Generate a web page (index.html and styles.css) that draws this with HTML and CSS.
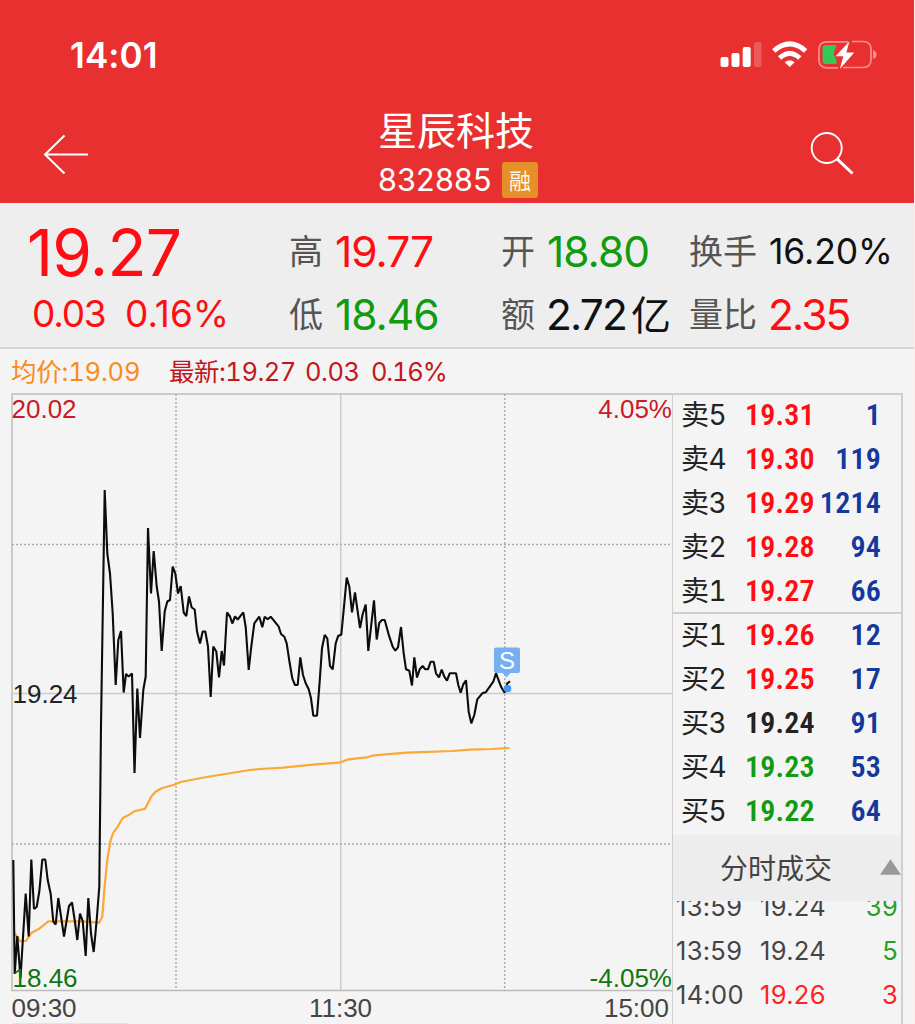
FILE: index.html
```html
<!DOCTYPE html>
<html lang="zh-CN">
<head>
<meta charset="utf-8">
<title>星辰科技 832885</title>
<link rel="stylesheet" href="styles.css">
</head>
<body>
<main class="app">
  <header class="header">
    <div class="status">
      <span class="clock">14:01</span>
      <svg class="status-icons" width="160" height="32" viewBox="718 39 160 32">
        <g fill="#fff">
          <rect x="720.5" y="57" width="8" height="10" rx="2"/>
          <rect x="731.5" y="53" width="8" height="14" rx="2"/>
          <rect x="742.7" y="47" width="8" height="20" rx="2"/>
          <rect x="754" y="42" width="7.5" height="25" rx="2" opacity=".2"/>
          <path d="M789.7 67l-5-4.800q5-3.800 10 0z"/>
        </g>
        <g fill="none" stroke="#fff" stroke-width="5">
          <path d="M773.800 51q15.900-14.200 31.800 0"/>
          <path d="M779.600 58q10.100-9 20.200 0"/>
        </g>
        <path d="M848 41.800H827q-8 0-8 8v10q0 8 8 8h11M843 67.500H863q8 0 8-8v-10q0-8-8-8h-11" fill="none" stroke="#f58e8e" stroke-width="1.700"/>
        <path d="M873 50q3.500 1 3.500 4.500t-3.500 4.500z" fill="#f58e8e"/>
        <path d="M826 45h10.500l-1 4q-3 4-.5 8l1.500 3v4H826q-3.500 0-3.500-3.500v-12q0-3.500 3.500-3.500z" fill="#36c759"/>
        <path d="M849.500 41.200L835.500 56.200H843.300L839.800 69L854.300 52.400H846.300z" fill="#fff"/>
      </svg>
    </div>
    <div class="nav">
      <svg class="back" width="46" height="42" viewBox="43 133 46 42"><path d="M64.500 135.500L45 154.500L64.500 173.500M45 154.500H88" fill="none" stroke="#fff" stroke-width="2"/></svg>
      <div class="name">
        <h1>星辰科技</h1>
        <p><span class="code">832885</span><span class="badge">融</span></p>
      </div>
      <svg class="search" width="46" height="46" viewBox="809 130 46 46"><circle cx="826.700" cy="148" r="15" fill="none" stroke="#fff" stroke-width="1.900"/><path d="M837 158.800L852.500 173.500" stroke="#fff" stroke-width="3"/></svg>
    </div>
  </header>

  <section class="quote">
    <div class="last">
      <b>19.27</b>
      <p><span class="diff">0.03</span><span>0.16%</span></p>
    </div>
    <dl class="stats">
      <div><dt>高</dt><dd class="up">19.77</dd></div>
      <div><dt>开</dt><dd class="down">18.80</dd></div>
      <div><dt>换手</dt><dd class="rate">16.20%</dd></div>
      <div><dt>低</dt><dd class="down">18.46</dd></div>
      <div><dt>额</dt><dd class="amount">2.72<i>亿</i></dd></div>
      <div><dt>量比</dt><dd class="up ratio">2.35</dd></div>
    </dl>
  </section>

  <p class="legend"><span class="avg">均价:19.09</span><span class="now">最新:19.27</span><span class="now chg">0.03</span><span class="now pct">0.16%</span></p>

  <section class="board">
    <div class="chart">
      <svg width="672" height="631" viewBox="0 393 672 631">
        <g fill="none" stroke="#bcbcbc" stroke-width="1.500">
          <path d="M12 394H672M12 393.500V990.500H672"/>
          <path d="M12 693.500H672M340.700 394V990" stroke="#cbcbcb"/>
          <path d="M12 544.500H672M12 844H672M176 394V991M504.700 394V991" stroke="#ababab" stroke-dasharray="2 2"/>
        </g>
        <polyline fill="none" stroke="#faa935" stroke-width="2.200" points="14.7,933 20,941 26,941 31.7,932.7 39.3,928.7 48.3,921.3 80,921.3 99.3,922.7 102.3,916.7 104.3,890 107.3,860 110.7,840 113.3,832.7 117.3,827.3 122.7,818 128.3,815.3 134.3,811.3 145,808.7 151.7,796 156,791.500 161.7,788.3 173.3,785 181.7,781.7 206.7,777 250,770 260,769 283,767.7 313,764.7 340.7,762.3 348.3,759.3 366.7,757.3 374,755.3 406.7,752.7 453,751 470,749.7 491.7,749 509.5,748"/>
        <polyline fill="none" stroke="#0c0c0c" stroke-width="2.100" stroke-linejoin="bevel" points="13.3,860 14.7,974 17.3,936 20.5,978 25.7,893.5 28.7,936.5 31.3,859.5 34,909 36.7,907 39.3,891.5 42.3,859.5 45.3,859.5 47.7,880 50.7,894 53.3,921.5 55.7,924.5 58.3,898 64,936.5 69,906 72,902.5 74.7,920 77.3,940 80,913.5 82.7,921 85.7,956 88.3,898 91,933.5 93.7,952 96.7,920 99.3,886.5 101,725 104.7,490 107.3,553.5 110,573.5 112.7,613.5 115.7,685 118.3,640 121,631 123.7,692.5 126,674 128.7,676.5 132,673.5 134.5,773 137.3,688.5 140,738 143.3,690 145.7,676.5 148,528 151,593.5 153.7,551 156.7,586.5 159,601.5 161.7,651 164.7,611.5 167.3,601.5 170,600 172.7,566.5 175.3,573.5 178,593.5 180.7,586 183.7,612.5 186.3,616 189,596.5 191.7,607.5 194.7,609.5 197,631.5 200,643.5 202.7,631.5 205.3,631.5 208,646.5 210.7,697 213.3,646.5 216.3,651.5 219,677.5 221.7,651 224,665.5 227,612.5 230,616.5 232.3,623.5 235,616.5 237.7,619.5 243.3,612.3 245.7,627 248.7,670 251.3,646.5 254.3,623.3 259.3,616.7 262.3,627.3 264.7,616.7 267.7,619.3 270.7,616.7 278.7,626.7 281,634 284.3,636.7 286.7,643.3 289.7,663.3 292.3,678.3 295,685 297.7,685 300.3,657.3 303,675 305.7,683.3 308.7,689.3 311,698.3 313.3,715.7 317,715.7 319.3,686.7 322,648.3 324.7,635 327.3,638.3 330,666 332.7,669.3 335.7,643.3 338.3,635.7 341.3,634.7 344,606.7 346.7,577.5 349.3,586.7 352,612.3 355,592.3 360,628 362.7,614 365.7,604.5 368.3,651 374,600.3 376.7,639.5 379.3,622.7 382,620 384.7,620 389.3,636.7 392.7,646.7 395.3,650.7 398,647.3 401,627 403.7,653.3 406,669.3 409.3,670.7 412,685.5 414.3,657.3 417,677.5 419.7,669.3 422.7,666 425.3,669.3 428,669.3 430.7,661.7 433.7,661.7 436,673.3 439,677.3 441.7,669.500 444.3,676.7 447,680.7 449.7,673.3 456,673.3 458.3,685 460.7,692.7 463.3,684.3 466,680.3 468.7,711.7 471.3,723.3 474.3,715 477.3,699.3 482.3,693.3 485.7,692.3 493.3,681.7 496,673.3 501.3,687.3 504.7,692.7 507.3,683.3 510,681.3"/>
        <circle cx="507.500" cy="688.500" r="3.800" fill="#4794ee"/>
        <path d="M496 647.500h22q2 0 2 2v21.500q0 2-2 2h-7.500l-4 4.500l-4-4.500h-6.500q-2 0-2-2v-21.500q0-2 2-2z" fill="#77aff3"/>
        <g class="labels">
          <text x="11.500" y="417.500" fill="#c91a26">20.02</text>
          <text x="672" y="417.500" fill="#c91a26" text-anchor="end">4.05%</text>
          <text x="12.500" y="702.500" fill="#222">19.24</text>
          <text x="12.500" y="986.500" fill="#117411">18.46</text>
          <text x="672" y="986.500" fill="#117411" text-anchor="end">-4.05%</text>
          <text x="11.500" y="1016.500" fill="#444">09:30</text>
          <text x="340.500" y="1016.500" fill="#444" text-anchor="middle">11:30</text>
          <text x="669" y="1016.500" fill="#444" text-anchor="end">15:00</text>
          <text x="507" y="669" class="mark" fill="#fff" text-anchor="middle">S</text>
        </g>
        <path d="M12 1023.500H128" stroke="#e4e4e4"/>
      </svg>
    </div>
    <aside class="side">
      <ul class="book">
        <li><span>卖5</span><b class="up">19.31</b><em>1</em></li>
        <li><span>卖4</span><b class="up">19.30</b><em>119</em></li>
        <li><span>卖3</span><b class="up">19.29</b><em>1214</em></li>
        <li><span>卖2</span><b class="up">19.28</b><em>94</em></li>
        <li><span>卖1</span><b class="up">19.27</b><em>66</em></li>
      </ul>
      <ul class="book bids">
        <li><span>买1</span><b class="up">19.26</b><em>12</em></li>
        <li><span>买2</span><b class="up">19.25</b><em>17</em></li>
        <li><span>买3</span><b>19.24</b><em>91</em></li>
        <li><span>买4</span><b class="down">19.23</b><em>53</em></li>
        <li><span>买5</span><b class="down">19.22</b><em>64</em></li>
      </ul>
      <div class="trades-title">分时成交<svg width="22" height="16" viewBox="0 0 22 16"><path d="M0 16L11 0L22 16z" fill="#999"/></svg></div>
      <ul class="trades">
        <li><span>13:59</span><span>19.24</span><span class="sell">39</span></li>
        <li><span>13:59</span><span>19.24</span><span class="sell">5</span></li>
        <li><span>14:00</span><span class="buy">19.26</span><span class="buy">3</span></li>
      </ul>
    </aside>
  </section>
</main>
</body>
</html>
```
FILE: styles.css
```css
* { box-sizing: border-box; margin: 0; padding: 0; }
body { background: #f8eeee; font-family: Inter, "Noto Sans CJK SC", sans-serif; overflow: hidden; }
ul { list-style: none; }
i, em { font-style: normal; }
.app { width: 914px; height: 1024px; background: #f4f4f4; overflow: hidden; white-space: nowrap; }
.up { color: #ff0d12; }
.down { color: #109b10; }

.header { height: 203px; background: #e83030; color: #fff; }
.status { height: 109px; padding: 0 36px 0 70px; display: flex; justify-content: space-between; align-items: center; }
.clock { font-size: 35px; font-weight: 600; letter-spacing: .1px; }
.nav { height: 94px; padding: 0 59px 0 43px; display: flex; }
.back { margin-top: 24px; }
.search { margin: 21px 0 0 auto; }
.name { width: 160px; margin-left: 289px; }
.name h1 { font: 400 39px/44px "Noto Sans CJK SC", sans-serif; margin-top: -3px; }
.name p { display: flex; align-items: center; height: 59px; justify-content: space-between; }
.code { font-size: 30.500px; letter-spacing: .2px; }
.badge { width: 36px; height: 36px; border-radius: 3px; background: #e48f27; font: 400 22px/35px "Noto Sans CJK SC", sans-serif; text-align: center; color: #fff5e0; }

.quote { height: 146px; background: #eee; border-bottom: 2px solid #d4d4d4; display: flex; padding-top: 16px; }
.last { width: 289px; color: #ff0d12; padding-left: 27px; }
.last b { display: block; font-size: 64px; font-weight: 400; line-height: 68px; letter-spacing: -.7px; }
.last p { font-size: 37px; line-height: 53px; display: flex; padding-left: 5px; }
.last .diff { width: 93px; letter-spacing: -1.200px; }
.stats { display: grid; grid-template-columns: 212px 188px 225px; grid-auto-rows: 63px; }
.stats div { display: flex; align-items: center; gap: 12px; }
.stats dt { font: 400 34px/63px "Noto Sans CJK SC", sans-serif; color: #555; margin-top: -3px; }
.stats dd { font-size: 42.500px; line-height: 63px; letter-spacing: -1px; padding-top: 1px; }
.stats dd.rate { font-size: 35.500px; color: #111; letter-spacing: -.1px; }
.stats dd.amount, .stats dd.ratio { letter-spacing: -1.900px; margin-left: -1px; }
.amount { color: #111; display: flex; gap: 5px; }
.amount i { font: 400 40px/60px "Noto Sans CJK SC", sans-serif; }

.legend { height: 44px; padding-left: 11px; display: flex; font-size: 25.500px; line-height: 46px; font-variant-numeric: tabular-nums; }
.avg { color: #fa8a1c; width: 158px; letter-spacing: -.2px; }
.now { color: #c4161c; width: 136px; letter-spacing: -.5px; }
.now.chg { width: 66px; letter-spacing: -.5px; }
.now.pct { letter-spacing: -1.200px; }

.board { display: flex; height: 631px; }
.chart { width: 672px; }
.chart svg { display: block; }
.labels text { font-family: "Liberation Sans", sans-serif; font-size: 26px; }
.labels .mark { font-size: 24px; }
.side { width: 231px; border: 2px solid #cfcfcf; border-bottom: 0; border-left-width: 1px; color: #222; overflow: hidden; }
.book { height: 217px; }
.book.bids { height: 223px; border-top: 2px solid #cfcfcf; padding-top: 1px; }
.book li { height: 44.100px; display: grid; grid-template-columns: 64px 74px 62px; padding-left: 8px; align-items: center; line-height: 40px; }
.book li > * { margin-top: -5px; }
.book span { font: 400 28px/40px Inter, "Noto Sans CJK SC", sans-serif; font-variant-numeric: tabular-nums; letter-spacing: -.5px; }
.book b, .book em { font-family: Roboto, sans-serif; font-size: 30px; font-weight: 600; font-stretch: 86%; letter-spacing: .2px; }
.book em { color: #14389c; text-align: right; justify-self: end; }
.trades-title { position: relative; z-index: 1; height: 66px; background: #ededed; display: flex; align-items: center; padding: 0 0 3px 47px; font-size: 28px; color: #444; gap: 48px; }
.trades { margin-top: -16px; }
.trades li { height: 44px; display: grid; grid-template-columns: 84px 68px 70px; padding-left: 3px; font-size: 25.500px; line-height: 44px; color: #444; letter-spacing: .3px; }
.trades li :last-child { text-align: right; }
.trades .sell { color: #28a028; }
.trades .buy { color: #f22; }
```
